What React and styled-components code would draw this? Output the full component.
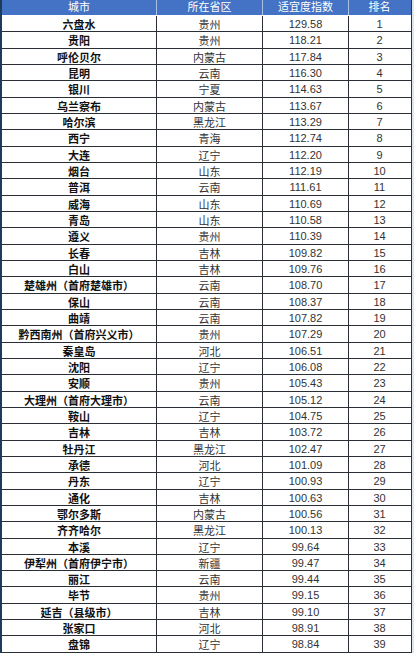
import React from 'react';
import styled, { createGlobalStyle } from 'styled-components';

const GlobalStyle = createGlobalStyle`
    html, body {
        margin: 0;
        padding: 0;
        background: #ffffff;
    }
    body {
        font-family: "Liberation Sans", "Noto Sans CJK SC", sans-serif;
        font-size: 11px;
        color: #111;
    }
`

const Frame = styled.div`
    width: 414px;
    height: 653px;
    overflow: hidden;
    display: flex;
    background: #dfe6ee;
`

const Table = styled.div`
    width: 409px;
    border-left: 2px solid #1d3b5c;
    border-right: 1px solid #2b3440;
    background: #ffffff;
    display: flex;
    flex-direction: column;
`

const cols = '155px 106px 86px 62px';

const HeadRow = styled.div`
    display: grid;
    grid-template-columns: ${cols};
    height: 15px;
    background: #4472c4;
    color: #ffffff;
`

const HeadCell = styled.div`
    display: flex;
    align-items: center;
    justify-content: center;
    font-size: 11px;
    line-height: 15px;
    border-right: 1px solid ${props => (props.last ? 'transparent' : 'rgba(255,255,255,0.55)')};
`

const Row = styled.div`
    display: grid;
    grid-template-columns: ${cols};
    height: 16.33px;
    box-sizing: border-box;
    border-bottom: 1px solid #2a2f36;
    flex-shrink: 0;
`

const Cell = styled.div`
    display: flex;
    align-items: center;
    justify-content: center;
    font-size: 11px;
    font-weight: ${props => (props.bold ? 700 : 400)};
    color: ${props => (props.bold ? '#111' : '#333')};
    border-right: 1px solid ${props => (props.last ? 'transparent' : '#2a2f36')};
    white-space: nowrap;
`

const Gap = styled.div`
    height: 1px;
    flex-shrink: 0;
`

const data = [
    ['六盘水', '贵州', '129.58'],
    ['贵阳', '贵州', '118.21'],
    ['呼伦贝尔', '内蒙古', '117.84'],
    ['昆明', '云南', '116.30'],
    ['银川', '宁夏', '114.63'],
    ['乌兰察布', '内蒙古', '113.67'],
    ['哈尔滨', '黑龙江', '113.29'],
    ['西宁', '青海', '112.74'],
    ['大连', '辽宁', '112.20'],
    ['烟台', '山东', '112.19'],
    ['普洱', '云南', '111.61'],
    ['威海', '山东', '110.69'],
    ['青岛', '山东', '110.58'],
    ['遵义', '贵州', '110.39'],
    ['长春', '吉林', '109.82'],
    ['白山', '吉林', '109.76'],
    ['楚雄州（首府楚雄市）', '云南', '108.70'],
    ['保山', '云南', '108.37'],
    ['曲靖', '云南', '107.82'],
    ['黔西南州（首府兴义市）', '贵州', '107.29'],
    ['秦皇岛', '河北', '106.51'],
    ['沈阳', '辽宁', '106.08'],
    ['安顺', '贵州', '105.43'],
    ['大理州（首府大理市）', '云南', '105.12'],
    ['鞍山', '辽宁', '104.75'],
    ['吉林', '吉林', '103.72'],
    ['牡丹江', '黑龙江', '102.47'],
    ['承德', '河北', '101.09'],
    ['丹东', '辽宁', '100.93'],
    ['通化', '吉林', '100.63'],
    ['鄂尔多斯', '内蒙古', '100.56'],
    ['齐齐哈尔', '黑龙江', '100.13'],
    ['本溪', '辽宁', '99.64'],
    ['伊犁州（首府伊宁市）', '新疆', '99.47'],
    ['丽江', '云南', '99.44'],
    ['毕节', '贵州', '99.15'],
    ['延吉（县级市）', '吉林', '99.10'],
    ['张家口', '河北', '98.91'],
    ['盘锦', '辽宁', '98.84'],
];

function App() {
    return (
        <>
            <GlobalStyle />
            <Frame>
                <Table>
                    <HeadRow>
                        <HeadCell>城市</HeadCell>
                        <HeadCell>所在省区</HeadCell>
                        <HeadCell>适宜度指数</HeadCell>
                        <HeadCell last>排名</HeadCell>
                    </HeadRow>
                    <Gap />
                    {data.map(([city, prov, score], i) => (
                        <Row key={city}>
                            <Cell bold>{city}</Cell>
                            <Cell>{prov}</Cell>
                            <Cell>{score}</Cell>
                            <Cell last>{i + 1}</Cell>
                        </Row>
                    ))}
                </Table>
            </Frame>
        </>
    );
}

export default App;
